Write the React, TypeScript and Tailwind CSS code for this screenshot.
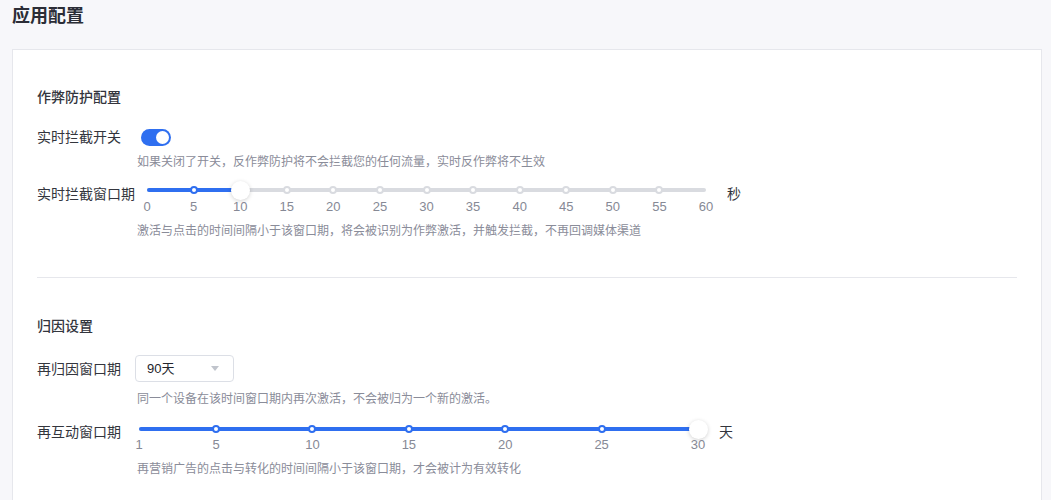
import React from "react";

const FONT = { fontFamily: '"Liberation Sans", "Noto Sans CJK SC", sans-serif' };

type SliderProps = {
  min: number;
  max: number;
  value: number;
  marks: number[];
  labelTop: number;
};

function Slider({ min, max, value, marks, labelTop }: SliderProps) {
  const pct = (v: number) => ((v - min) / (max - min)) * 100;
  return (
    <div className="relative w-[559px] h-[4px] rounded-full bg-[#d9dbe0]">
      <div
        className="absolute left-0 top-0 h-[4px] rounded-full bg-[#2f6ff0]"
        style={{ width: `${pct(value)}%` }}
      />
      {marks.map((m) =>
        m === min || m === max || m === value ? null : (
          <div
            key={m}
            className={
              m < value
                ? "absolute top-1/2 w-[8px] h-[8px] -ml-[4px] -mt-[4px] rounded-full bg-white border-2 border-[#2f6ff0]"
                : "absolute top-1/2 w-[8px] h-[8px] -ml-[4px] -mt-[4px] rounded-full bg-white border-2 border-[#d9dbe0]"
            }
            style={{ left: `${pct(m)}%` }}
          />
        )
      )}
      <div
        className="absolute top-1/2 w-[19px] h-[19px] -ml-[9.5px] -mt-[9.5px] rounded-full bg-white shadow-[0_1px_4px_rgba(0,0,0,0.18)]"
        style={{ left: `${pct(value)}%` }}
      />
      {marks.map((m) => (
        <span
          key={"l" + m}
          className="absolute -translate-x-1/2 text-[13px] leading-[16px] text-[#868995] whitespace-nowrap"
          style={{ left: `${pct(m)}%`, top: labelTop }}
        >
          {m}
        </span>
      ))}
    </div>
  );
}

export default function App() {
  return (
    <div className="min-h-screen bg-[#f7f7fa] pb-10" style={FONT}>
      <div className="pl-[12px] pt-[3px] text-[18px] leading-[26px] font-semibold text-[#2b2d36]">
        应用配置
      </div>
      <div className="ml-[12px] mr-[9px] mt-[20px] border border-[#e6e7ec] bg-white px-[24px] pb-[60px]">
        <div className="pt-[37px] text-[14px] leading-[20px] font-medium text-[#33353d]">作弊防护配置</div>

        <div className="mt-[20px] flex items-center">
          <div className="w-[100px] text-[14px] leading-[20px] text-[#33353d]">实时拦截开关</div>
          <div className="ml-[4px] flex h-[17px] w-[30px] items-center justify-end rounded-full bg-[#2f6ff0] pr-[2px]">
            <div className="h-[13px] w-[13px] rounded-full bg-white" />
          </div>
        </div>
        <div className="ml-[100px] mt-[6px] text-[12px] leading-[18px] text-[#8a8c99]">
          如果关闭了开关，反作弊防护将不会拦截您的任何流量，实时反作弊将不生效
        </div>

        <div className="mt-[13px] flex items-start">
          <div className="w-[100px] text-[14px] leading-[20px] text-[#33353d]">实时拦截窗口期</div>
          <div className="flex h-[38px] items-start">
            <div className="ml-[10px] mt-[4px]">
              <Slider min={0} max={60} value={10} marks={[0, 5, 10, 15, 20, 25, 30, 35, 40, 45, 50, 55, 60]} labelTop={11} />
            </div>
            <div className="ml-[21px] text-[14px] leading-[20px] text-[#33353d]">秒</div>
          </div>
        </div>
        <div className="ml-[100px] text-[12px] leading-[18px] text-[#8a8c99]">
          激活与点击的时间间隔小于该窗口期，将会被识别为作弊激活，并触发拦截，不再回调媒体渠道
        </div>

        <div className="mt-[37px] border-t border-[#e6e7ec]" />

        <div className="mt-[38px] text-[14px] leading-[20px] font-medium text-[#33353d]">归因设置</div>

        <div className="mt-[19px] flex items-center">
          <div className="w-[98px] text-[14px] leading-[20px] text-[#33353d]">再归因窗口期</div>
          <div className="flex h-[27px] w-[99px] items-center justify-between rounded-[4px] border border-[#dcdfe6] bg-white pl-[11px] pr-[14px]">
            <span className="text-[13px] text-[#23252c]">90天</span>
            <span className="h-0 w-0 border-l-[4px] border-r-[4px] border-t-[5px] border-l-transparent border-r-transparent border-t-[#c0c4cc]" />
          </div>
        </div>
        <div className="ml-[100px] mt-[8px] text-[12px] leading-[18px] text-[#8a8c99]">
          同一个设备在该时间窗口期内再次激活，不会被归为一个新的激活。
        </div>

        <div className="mt-[14px] flex items-start">
          <div className="w-[100px] text-[14px] leading-[20px] text-[#33353d]">再互动窗口期</div>
          <div className="flex h-[38px] items-start">
            <div className="ml-[2px] mt-[5px]">
              <Slider min={1} max={30} value={30} marks={[1, 5, 10, 15, 20, 25, 30]} labelTop={10} />
            </div>
            <div className="ml-[21px] text-[14px] leading-[20px] text-[#33353d]">天</div>
          </div>
        </div>
        <div className="ml-[100px] text-[12px] leading-[18px] text-[#8a8c99]">
          再营销广告的点击与转化的时间间隔小于该窗口期，才会被计为有效转化
        </div>
      </div>
    </div>
  );
}
